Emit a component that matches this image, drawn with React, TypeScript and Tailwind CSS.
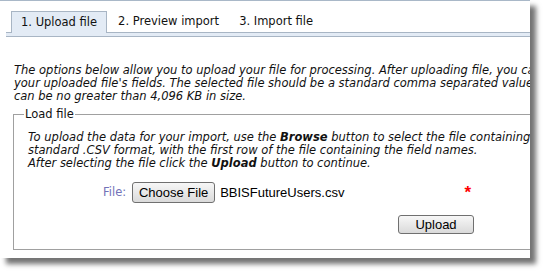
const sans = "font-['DejaVu_Sans',sans-serif]"
const arial = "font-['Liberation_Sans',Arial,sans-serif]"

function Tabs() {
  return (
    <div>
      <div className={`flex items-end pl-[11px] mt-[10px] text-[11.5px] text-[#111] ${sans}`}>
        <div className="relative z-10 flex h-[22px] items-center border border-b-0 border-[#a8b5c4] bg-[#e3ebf5] px-[9px]">
          1. Upload file
        </div>
        <div className="flex h-[22px] items-center px-[11px]">2. Preview import</div>
        <div className="flex h-[22px] items-center px-[9px]">3. Import file</div>
      </div>
      <div className="-mt-px ml-[6px] h-[5px] border-y border-[#a8b5c4] bg-[#e3ebf5]" />
    </div>
  )
}

function Btn({ children, className }: { children: React.ReactNode; className: string }) {
  return (
    <button
      className={`rounded-[3px] border border-[#707070] bg-gradient-to-b from-[#f7f7f7] to-[#dadada] text-[13px] leading-none text-black ${arial} ${className}`}
    >
      {children}
    </button>
  )
}

export default function App() {
  return (
    <div className="h-[273px] w-[545px] bg-white">
      <div className="h-[258px] w-[530px] overflow-hidden border-t border-[#a9b8c8] bg-white shadow-[6px_6px_5px_rgba(0,0,0,0.55)]">
        <Tabs />

        <div className={`mt-[27px] pl-[14px] text-[11.5px] italic leading-[13px] whitespace-nowrap text-[#111] ${sans}`}>
          <p>The options below allow you to upload your file for processing. After uploading file, you can map the fields to</p>
          <p>your uploaded file's fields. The selected file should be a standard comma separated value (.CSV) file and</p>
          <p>can be no greater than 4,096 KB in size.</p>
        </div>

        <fieldset className={`ml-[13px] mt-[4px] w-[560px] border border-[#a0a0a0] pb-[15px] ${sans}`}>
          <legend className="ml-[10px] px-[1px] text-[11.5px] leading-[14px] text-[#111]">Load file</legend>
          <div className="pl-[14px]">
            <div className="pt-[10px] text-[11.5px] italic leading-[13px] whitespace-nowrap text-[#111]">
              <p>
                To upload the data for your import, use the <b>Browse</b> button to select the file containing the data in
              </p>
              <p>standard .CSV format, with the first row of the file containing the field names.</p>
              <p>
                After selecting the file click the <b>Upload</b> button to continue.
              </p>
            </div>

            <div className="mt-[12px] flex h-[21px] items-center pl-[75px]">
              <span className="text-[11.5px] text-[#7272b8]">File:</span>
              <Btn className="ml-[6px] h-[21px] w-[83px]">Choose File</Btn>
              <span className={`ml-[5px] text-[13px] text-black ${arial}`}>BBISFutureUsers.csv</span>
              <span className={`ml-[120px] text-[17px] font-bold leading-none text-[#ff0000] ${arial}`}>*</span>
            </div>

            <div className="mt-[12px] flex pl-[370px]">
              <Btn className="h-[19px] w-[76px]">Upload</Btn>
            </div>
          </div>
        </fieldset>
      </div>
    </div>
  )
}
